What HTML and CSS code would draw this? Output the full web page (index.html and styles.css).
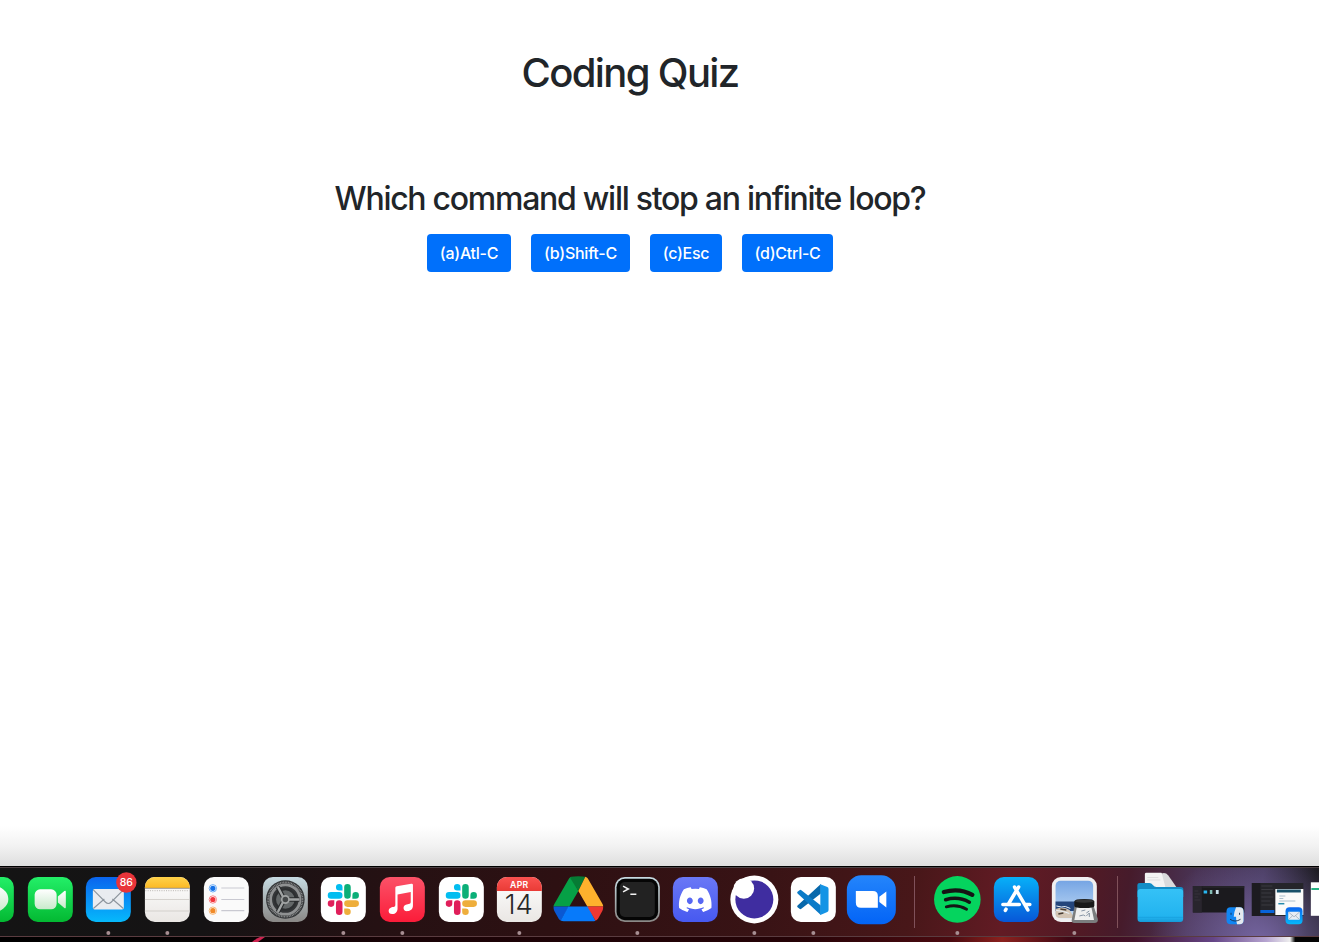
FILE: index.html
```html
<!DOCTYPE html>
<html lang="en">
<head>
<meta charset="utf-8">
<title>Coding Quiz</title>
<link rel="stylesheet" href="styles.css">
</head>
<body>
<svg class="defs" aria-hidden="true">
  <defs>
    <linearGradient id="green" x2="0" y2="1"><stop stop-color="#23ef68"/><stop offset="1" stop-color="#03b932"/></linearGradient>
    <linearGradient id="white" x2="0" y2="1"><stop stop-color="#fff"/><stop offset="1" stop-color="#c8eacb"/></linearGradient>
    <linearGradient id="mail" x2="0" y2="1"><stop stop-color="#0a64ee"/><stop offset="1" stop-color="#06b9fb"/></linearGradient>
    <linearGradient id="paper" x2="0" y2="1"><stop stop-color="#fff"/><stop offset="1" stop-color="#e9e6e3"/></linearGradient>
    <linearGradient id="yellow" x2="0" y2="1"><stop stop-color="#ffd24a"/><stop offset="1" stop-color="#fbb925"/></linearGradient>
    <linearGradient id="steel" x2="0" y2="1"><stop stop-color="#c7dbe2"/><stop offset="1" stop-color="#8a8886"/></linearGradient>
    <linearGradient id="music" x2="0" y2="1"><stop stop-color="#fb5268"/><stop offset="1" stop-color="#fb1c39"/></linearGradient>
    <linearGradient id="cal" x2="0" y2="1"><stop stop-color="#fa5250"/><stop offset="1" stop-color="#e93b36"/></linearGradient>
    <linearGradient id="discord" x2="0" y2="1"><stop stop-color="#6a78f6"/><stop offset="1" stop-color="#4759f0"/></linearGradient>
    <linearGradient id="zoom" x2="0" y2="1"><stop stop-color="#2485fb"/><stop offset="1" stop-color="#0364f6"/></linearGradient>
    <linearGradient id="store" x2="0" y2="1"><stop stop-color="#07b0f8"/><stop offset="1" stop-color="#0757d8"/></linearGradient>
    <linearGradient id="sky" x2="0" y2="1"><stop stop-color="#76a5e4"/><stop offset="1" stop-color="#c3dcf5"/></linearGradient>
    <linearGradient id="folder" x2="0" y2="1"><stop stop-color="#35c1f6"/><stop offset=".85" stop-color="#22b3ef"/><stop offset="1" stop-color="#159bd8"/></linearGradient>
    <g id="slack" transform="translate(-15.6 16.9) scale(1.3)">
      <path fill="#e01e5a" d="M5.042 15.165a2.528 2.528 0 0 1-2.52 2.523A2.528 2.528 0 0 1 0 15.165a2.527 2.527 0 0 1 2.522-2.52h2.52v2.52zM6.313 15.165a2.527 2.527 0 0 1 2.521-2.52 2.527 2.527 0 0 1 2.521 2.52v6.313A2.528 2.528 0 0 1 8.834 24a2.528 2.528 0 0 1-2.521-2.522v-6.313z"/>
      <path fill="#02bdf0" d="M8.834 5.042a2.528 2.528 0 0 1-2.521-2.52A2.528 2.528 0 0 1 8.834 0a2.528 2.528 0 0 1 2.521 2.522v2.52H8.834zM8.834 6.313a2.528 2.528 0 0 1 2.521 2.521 2.528 2.528 0 0 1-2.521 2.521H2.522A2.528 2.528 0 0 1 0 8.834a2.528 2.528 0 0 1 2.522-2.521h6.312z"/>
      <path fill="#0baf78" d="M18.956 8.834a2.528 2.528 0 0 1 2.522-2.521A2.528 2.528 0 0 1 24 8.834a2.528 2.528 0 0 1-2.522 2.521h-2.522V8.834zM17.688 8.834a2.528 2.528 0 0 1-2.523 2.521 2.527 2.527 0 0 1-2.52-2.521V2.522A2.527 2.527 0 0 1 15.165 0a2.528 2.528 0 0 1 2.523 2.522v6.312z"/>
      <path fill="#eeae3c" d="M15.165 18.956a2.528 2.528 0 0 1 2.523 2.522A2.528 2.528 0 0 1 15.165 24a2.527 2.527 0 0 1-2.52-2.522v-2.522h2.52zM15.165 17.688a2.527 2.527 0 0 1-2.52-2.523 2.526 2.526 0 0 1 2.52-2.52h6.313A2.527 2.527 0 0 1 24 15.165a2.528 2.528 0 0 1-2.522 2.523h-6.313z"/>
    </g>
    <clipPath id="tile"><rect x="-22.5" y="10" width="45" height="45" rx="10"/></clipPath>
  </defs>
</svg>

<main class="quiz">
  <h1 class="quiz-title">Coding Quiz</h1>
  <h2 class="quiz-question">Which command will stop an infinite loop?</h2>
  <div class="answers">
    <button class="btn btn-a">(a)Atl-C</button>
    <button class="btn btn-b">(b)Shift-C</button>
    <button class="btn btn-c">(c)Esc</button>
    <button class="btn btn-d">(d)Ctrl-C</button>
  </div>
</main>

<div class="dock-shadow"></div>
<footer class="dock">
  <!-- Messages -->
  <svg class="app" viewBox="-29.35 0 58.7 69"><rect x="-22.5" y="10" width="45" height="45" rx="10" fill="url(#green)"/><ellipse cx="0" cy="32" rx="17" ry="13.5" fill="url(#white)"/></svg>
  <!-- FaceTime -->
  <svg class="app" viewBox="-29.35 0 58.7 69"><rect x="-22.5" y="10" width="45" height="45" rx="10" fill="url(#green)"/><rect x="-15.7" y="22.3" width="22" height="20" rx="5.5" fill="url(#white)"/><path d="M7.5 29.5L14 24q1.5-1 1.5 1v15q0 2-1.5 1L7.5 35.5z" fill="url(#white)"/></svg>
  <!-- Mail -->
  <svg class="app" viewBox="-29.35 0 58.7 69"><rect x="-22.5" y="10" width="45" height="45" rx="10" fill="url(#mail)"/><rect x="-15.5" y="22" width="31" height="20.5" rx="1.8" fill="#e9ecf0"/><path d="M-15 41.5L-4 32M15 41.5L4 32M-15 22.8L-3 35q3 3 6 0L15 22.8" fill="none" stroke="#8d959d" stroke-width="1.1"/><circle cx="18" cy="15.5" r="10.2" fill="#e9343a"/><text class="badge" x="18" y="19.3">86</text><circle class="dot" cy="66" r="2"/></svg>
  <!-- Notes -->
  <svg class="app" viewBox="-29.35 0 58.7 69"><g clip-path="url(#tile)"><rect x="-23" y="10" width="46" height="46" fill="url(#paper)"/><rect x="-23" y="10" width="46" height="11" fill="url(#yellow)"/><path d="M-23 21.3h46" stroke="#8f8a80" stroke-width=".9"/><path d="M-22 23.7h44" stroke="#aaa59f" stroke-width=".8" stroke-dasharray="1 1.3"/><path d="M-23 32.5h46M-23 44h46" stroke="#cdc9c5" stroke-width=".8"/></g><circle class="dot" cy="66" r="2"/></svg>
  <!-- Reminders -->
  <svg class="app" viewBox="-29.35 0 58.7 69"><rect x="-22.5" y="10" width="45" height="45" rx="10" fill="#fafafa"/><path d="M-5 21H18M-5 32.5H18M-5 43.6H18" stroke="#c9c9d1" stroke-width="1.2"/><g fill="#fff"><circle cx="-13.5" cy="21.3" r="3.7" stroke="#4b9af4" stroke-width=".8"/><circle cx="-13.5" cy="32.5" r="3.7" stroke="#f7646a" stroke-width=".8"/><circle cx="-13.5" cy="43.7" r="3.7" stroke="#f5a758" stroke-width=".8"/></g><circle cx="-13.5" cy="21.3" r="2.6" fill="#1672e8"/><circle cx="-13.5" cy="32.5" r="2.6" fill="#f2343b"/><circle cx="-13.5" cy="43.7" r="2.6" fill="#f18a27"/></svg>
  <!-- System Preferences -->
  <svg class="app" viewBox="-29.35 0 58.7 69"><rect x="-22.5" y="10" width="45" height="45" rx="10" fill="url(#steel)"/><g fill="none" transform="translate(0 32.5)"><circle r="19.3" fill="#343638"/><circle r="17.2" stroke="#8d8f90" stroke-width="1.7" stroke-dasharray=".9 .7"/><circle r="14.7" stroke="#8f9192" stroke-width="2.8"/><circle r="10.3" fill="#646869" stroke="#2d2f31" stroke-width="2"/><path d="M2 0H14M-2-2L-7.5-12.5M-2 2L-7.5 12.5" stroke="#292b2d" stroke-width="4.6"/><path d="M2 0H14M-2-2L-7.5-12.5M-2 2L-7.5 12.5" stroke="#a1a4a4" stroke-width="2.4"/><circle r="3.6" fill="#454849" stroke="#a1a4a4" stroke-width="1.7"/></g></svg>
  <!-- Slack -->
  <svg class="app" viewBox="-29.35 0 58.7 69"><rect x="-22.5" y="10" width="45" height="45" rx="10" fill="#fff"/><use href="#slack"/><circle class="dot" cy="66" r="2"/></svg>
  <!-- Music -->
  <svg class="app" viewBox="-29.35 0 58.7 69"><rect x="-22.5" y="10" width="45" height="45" rx="10" fill="url(#music)"/><path d="M-7 20.7Q-7 19.5-5.7 19.2L9 16.8Q10.6 16.5 10.6 18V38.5C10.6 42 8.5 43.8 5.5 44.1C2.5 44.4 1 42.8 1.2 40.7C1.5 37.5 5 37.2 7.2 36.7Q8.4 36.4 8.4 35V25L-4.8 27.6V41.4C-4.8 45-7 46.8-10 47.1C-12.5 47.2-13.8 45.8-13.7 43.8C-13.5 40.5-10 40.2-8.2 39.8Q-7 39.4-7 38z" fill="#fff"/><circle class="dot" cy="66" r="2"/></svg>
  <!-- Slack -->
  <svg class="app" viewBox="-29.35 0 58.7 69"><rect x="-22.5" y="10" width="45" height="45" rx="10" fill="#fff"/><use href="#slack"/></svg>
  <!-- Calendar -->
  <svg class="app" viewBox="-29.35 0 58.7 69"><g clip-path="url(#tile)"><rect x="-23" y="10" width="46" height="46" fill="url(#paper)"/><rect x="-23" y="10" width="46" height="14" fill="url(#cal)"/></g><text class="month" x="0" y="20.9">APR</text><text class="day" x="-.5" y="47">14</text><circle class="dot" cy="66" r="2"/></svg>
  <!-- Google Drive -->
  <svg class="app" viewBox="-29.35 0 58.7 69"><g transform="translate(0 32)"><path d="M-7-22.2Q-8.5-21.8-9.3-20.4L-24 5Q-25 6.5-24.8 7.5H-9L0-8z" fill="#06a046"/><path d="M-7-22.2Q-5-22.8 0-22.8T7-22.2L0-8-8-20.8z" fill="#067b34"/><path d="M7-22.2Q8.8-21.8 9.5-20.4L24.2 5Q25 6.5 24.8 7.5H9L0-8z" fill="#feb12d"/><path d="M-24.8 7.5H-9.5L-17.5 21.6Q-19 21-19.8 19.6L-24 12Q-25 10-24.8 7.5z" fill="#0a58d2"/><path d="M-10 7.5H10L17 21.7Q16 22.2 14 22.2H-14.5Q-16.5 22.2-17.7 21.5z" fill="#077afa"/><path d="M9 7.5H24.8Q25 10 24 12L19.8 19.6Q19 21 17.2 21.7z" fill="#ef3832"/></g></svg>
  <!-- Terminal -->
  <svg class="app" viewBox="-29.35 0 58.7 69"><rect x="-22.5" y="10" width="45" height="45" rx="10" fill="url(#steel)"/><rect x="-20.8" y="11.7" width="41.6" height="41.6" rx="8.5" fill="#050505"/><rect x="-17.5" y="15" width="35" height="35" rx="5" fill="#222"/><path d="M-14.3 19.2L-9 22L-14.3 24.9M-7 27.2H-1" fill="none" stroke="#f2f2f2" stroke-width="1.5"/><circle class="dot" cy="66" r="2"/></svg>
  <!-- Discord -->
  <svg class="app" viewBox="-29.35 0 58.7 69"><rect x="-22.5" y="10" width="45" height="45" rx="10" fill="url(#discord)"/><path transform="translate(-16.4 16.3) scale(1.36)" fill="#fff" d="M20.317 4.37a19.791 19.791 0 0 0-4.885-1.515.074.074 0 0 0-.079.037c-.21.375-.444.864-.608 1.25a18.27 18.27 0 0 0-5.487 0 12.64 12.64 0 0 0-.617-1.25.077.077 0 0 0-.079-.037A19.736 19.736 0 0 0 3.677 4.37a.07.07 0 0 0-.032.027C.533 9.046-.32 13.58.099 18.057a.082.082 0 0 0 .031.057 19.9 19.9 0 0 0 5.993 3.03.078.078 0 0 0 .084-.028c.462-.63.874-1.295 1.226-1.994a.076.076 0 0 0-.041-.106 13.107 13.107 0 0 1-1.872-.892.077.077 0 0 1-.008-.128c.126-.094.252-.192.372-.292a.074.074 0 0 1 .077-.01c3.928 1.793 8.18 1.793 12.062 0a.074.074 0 0 1 .078.01c.12.098.246.198.373.292a.077.077 0 0 1-.006.127 12.299 12.299 0 0 1-1.873.892.077.077 0 0 0-.041.107c.36.698.772 1.362 1.225 1.993a.076.076 0 0 0 .084.028 19.839 19.839 0 0 0 6.002-3.03.077.077 0 0 0 .032-.054c.5-5.177-.838-9.674-3.549-13.66a.061.061 0 0 0-.031-.03zM8.02 15.33c-1.183 0-2.157-1.085-2.157-2.419 0-1.333.956-2.419 2.157-2.419 1.21 0 2.176 1.096 2.157 2.42 0 1.333-.956 2.418-2.157 2.418zm7.975 0c-1.183 0-2.157-1.085-2.157-2.419 0-1.333.955-2.419 2.157-2.419 1.21 0 2.176 1.096 2.157 2.42 0 1.333-.946 2.418-2.157 2.418z"/></svg>
  <!-- Insomnia -->
  <svg class="app" viewBox="-29.35 0 58.7 69"><circle cy="32.4" r="24" fill="#fff"/><circle cy="32.4" r="19" fill="#3f2da0"/><circle cx="-10.5" cy="21.5" r="10.3" fill="#fff"/><circle class="dot" cy="66" r="2"/></svg>
  <!-- VS Code -->
  <svg class="app" viewBox="-29.35 0 58.7 69"><rect x="-22.5" y="10" width="45" height="45" rx="10" fill="#fff"/><path d="M-15.8 38.5L7.5 17v9.5L-12 41.8q-1 .7-1.8 0l-2-1.6q-.8-.8 0-1.7z" fill="#0868ab"/><path d="M-15.8 26.5L7.5 48v-9.5L-12 23.2q-1-.7-1.8 0l-2 1.6q-.8.8 0 1.7z" fill="#0b7bc8"/><path d="M7 17.2L14 20q1.2.5 1.2 2v21q0 1.5-1.2 2L7 48z" fill="#1494e5"/><circle class="dot" cy="66" r="2"/></svg>
  <!-- Zoom -->
  <svg class="app" viewBox="-29.35 0 58.7 69"><rect x="-24.5" y="8.2" width="49" height="49" rx="14.5" fill="url(#zoom)"/><path d="M-15.5 24H1.5Q6.5 24 6.5 29V40.7H-10.5Q-15.5 40.7-15.5 35.7zM8 29.8L15 24.4V40.5L8 35z" fill="#fff"/></svg>
  <div class="divider"></div>
  <!-- Spotify -->
  <svg class="app" viewBox="-29.35 0 58.7 69"><circle cy="32.4" r="23.3" fill="#05d45e"/><g fill="none" stroke="#151515" stroke-linecap="round"><path d="M-13.5 25Q2 20.5 15 27.8" stroke-width="4.3"/><path d="M-11.7 32.7Q1 29 12 35.2" stroke-width="3.6"/><path d="M-11 39.8Q0 37 9.2 42.2" stroke-width="2.9"/></g><circle class="dot" cy="66" r="2"/></svg>
  <!-- App Store -->
  <svg class="app" viewBox="-29.35 0 58.7 69"><rect x="-22.5" y="10" width="45" height="45" rx="10" fill="url(#store)"/><g fill="none" stroke="#fff" stroke-width="3.5" stroke-linecap="round"><path d="M2.3 20L-8.2 37.5M-1.8 20L11.5 43M-13.5 37.5H3M9.5 37.5H13.5M-10.3 42.2L-11 43.4"/></g></svg>
  <!-- Preview -->
  <svg class="app" viewBox="-29.35 0 58.7 69"><rect x="-22.5" y="10" width="45" height="45" rx="9" fill="#f0eff0"/><rect x="-18.8" y="13.7" width="37.6" height="37.6" rx="5" fill="url(#sky)"/><path d="M-18.8 34.5H18.8V44H-18.8z" fill="#24457b"/><path d="M-18.8 42q8-3 14 1l5 8H-14q-4.8 0-4.8-4z" fill="#d3c5b5"/><path d="M-18 39l5 1 4-.5 5 2M-18 43.5l7 1 6 2" stroke="#e9f2fa" fill="none"/><path d="M-14 42l6 1M-16 47l5-1" stroke="#493e35" stroke-width="1.5"/><path d="M.5 38H19L23.5 52Q24 56 20 56H0Q-3.5 56-2.5 52z" fill="#7b7d7e"/><path d="M2.5 40H17L19.7 53H0z" fill="#efefef"/><path d="M7 44l4-1M12 46l3-2M5 49l4-1 2 1M12 49l3-3v4" stroke="#8694a4" fill="none"/><path d="M0 34.5Q0 32 10 32T20 34.5V39Q20 41 10 41T0 39z" fill="#191919"/><ellipse cx="10" cy="34.2" rx="9.2" ry="1.6" fill="#353535"/><circle class="dot" cy="66" r="2"/></svg>
  <div class="divider"></div>
  <!-- Folder -->
  <svg class="app" viewBox="-29.35 0 58.7 69"><path d="M-15.5 7Q-15.5 5.7-14 5.7H1L15.5 22H-15.5z" fill="#f3f3f3"/><path d="M1.5 6.5Q5 5 8 8.5L16 20V24H6z" fill="#d9dadc"/><path d="M-13 10.5H-2M-13 13H0" stroke="#d5d5d7" stroke-width=".7"/><path d="M-23 18.5Q-23 16-20.5 16H-11Q-9 16-7.5 18T-4 20H20.5Q23 20 23 22.5V30H-23z" fill="#128dc6"/><rect x="-22.8" y="22" width="45.6" height="33" rx="3" fill="url(#folder)"/><path d="M-22.5 50.3H22.5" stroke="#159cd8" stroke-width=".7"/></svg>
  <!-- Minimized Finder window -->
  <svg class="app" viewBox="-29.35 0 58.7 69"><rect x="-25.5" y="19" width="51.5" height="26.5" fill="#1b1a1e"/><rect x="-25.5" y="19" width="9" height="26.5" fill="#28252d"/><path d="M-16 20H26" stroke="#2d2a31"/><path d="M-24 24h4M-24 27h6M-24 30h4M-24 33h6" stroke="#3c3742" stroke-width=".7"/><path d="M-14.7 23.5h3.5v3h-3.5z" fill="#28b5ef"/><path d="M-8.5 23h2.5v4h-2.5z" fill="#83bdb6"/><path d="M-2.5 23h2.8v4h-2.8z" fill="#c7dfeb"/><g transform="translate(16.7 48.8)"><rect x="-8.5" y="-8.5" width="17" height="17" rx="4" fill="#1186f3"/><path d="M1-8.5H4.5Q8.5-8.5 8.5-4.5V4.5Q8.5 8.5 4.5 8.5H2Q1 5 1 1H-1.3Q-1-4 1-8.5z" fill="#e4e9ef"/><path d="M-4-3v2M4.5-3v2M-5 3.5Q0 7 5.5 3.5" fill="none" stroke="#18304e" stroke-width=".9"/></g></svg>
  <!-- Minimized Mail window -->
  <svg class="app" viewBox="-29.35 0 58.7 69"><rect x="-25.5" y="16" width="51.5" height="33" fill="#25252a"/><rect x="-25.5" y="16" width="8.5" height="33" fill="#1c1b20"/><path d="M-16 19h11M-16 22.5h12M-16 26h10M-16 30h12M-16 34h9M-16 38h12" stroke="#3b3b41"/><rect x="-17" y="43" width="14" height="3" fill="#0864d9"/><rect x="-2" y="22" width="28" height="26" fill="#fafafa"/><path d="M-.5 24h24" stroke="#185069" stroke-width="3"/><path d="M2 29h6M2 31.5h4M2 34h16" stroke="#9ab1c2" stroke-width=".8"/><path d="M1 36.7h6" stroke="#258aac" stroke-width="1.5"/><g transform="translate(16.7 48.8)"><rect x="-8.5" y="-8.5" width="17" height="17" rx="4" fill="url(#mail)"/><rect x="-5.8" y="-4" width="11.6" height="8" rx=".7" fill="#e7edf4"/><path d="M-5.500-3.700L0 1L5.500-3.700M-5.500 3.700L-1.500 0M5.500 3.700L1.500 0" fill="none" stroke="#8795a4" stroke-width=".6"/></g></svg>
  <!-- Minimized browser window -->
  <svg class="app" viewBox="-29.35 0 58.7 69"><rect x="-25.5" y="15.3" width="51" height="33.5" fill="#fff"/><path d="M-25 22h50" stroke="#27b384" stroke-width="2"/></svg>
</footer>
<div class="wallpaper"><svg class="streak" viewBox="0 0 20 5"><path d="M2 5Q7 1 10 0h5L8 5z" fill="#cd2350"/></svg></div>
</body>
</html>
```
FILE: styles.css
```css
* { box-sizing: border-box; }

body {
  margin: 0;
  height: 942px;
  display: flex;
  flex-direction: column;
  overflow: hidden;
  background: #fff;
  color: #212529;
  font-family: Inter, "Liberation Sans", sans-serif;
}

.defs { position: absolute; width: 0; height: 0; }

.quiz {
  flex: 1;
  width: 1260px;
  padding-top: 49px;
  text-align: center;
}

.quiz-title {
  margin: 0;
  font-size: 40px;
  font-weight: 550;
  line-height: 48px;
  letter-spacing: -1.65px;
}

.quiz-question {
  margin: 83px 0 0;
  font-size: 32px;
  font-weight: 550;
  line-height: 38px;
  letter-spacing: -1.27px;
}

.answers {
  display: flex;
  justify-content: center;
  gap: 20px;
  margin-top: 16px;
}

.btn {
  height: 38px;
  padding: 0;
  border: 0;
  border-radius: 4px;
  background: #0070fb;
  color: #fff;
  font: 450 16px/38px Inter, "Liberation Sans", sans-serif;
  letter-spacing: -0.26px;
  white-space: nowrap;
}
.btn-a { width: 84px; }
.btn-b { width: 99px; }
.btn-c { width: 72px; }
.btn-d { width: 91px; }

.dock-shadow {
  height: 40px;
  background: linear-gradient(#fff, #f2f2f2 50%, #dedede);
}

.dock {
  display: flex;
  flex: none;
  height: 71px;
  padding-top: 1px;
  border-top: 1px solid #000;
  border-bottom: 1px solid #5a3c40;
  box-shadow: inset 0 1px #4b4043;
  background:
    radial-gradient(ellipse 110px 90px at 1260px 75px, #7565a0, transparent),
    linear-gradient(100deg, #141414 0, #151314 16%, #251113 29%, #2d1012 42%, #391315 58%, #481719 69%, #621b24 76%, #511a25 82%, #461b2b 85%, #493354 90%, #46395c 95%, #19181c 99%);
}

.app {
  flex: none;
  width: 58.7px;
  height: 69px;
  margin-top: -1px;
  overflow: visible;
}
.app:first-child { margin-left: -37.9px; }

.dot { fill: #a78f93; }
.badge { fill: #fff; font: 500 10.5px Inter, sans-serif; text-anchor: middle; }
.month { fill: #fff; font: 600 8.7px Inter, sans-serif; text-anchor: middle; letter-spacing: .3px; }
.day { fill: #282828; font: 300 27.5px Inter, sans-serif; text-anchor: middle; letter-spacing: 0; }

.divider {
  flex: none;
  width: 1px;
  height: 52px;
  margin: 8px 12.9px 0;
  background: #80515a;
}

.wallpaper {
  flex: none;
  height: 5px;
  padding-left: 250px;
  background: linear-gradient(90deg, #000 0, #050102 18%, #190306 30%, #250307 60%, #4a0a10 72%, #8b211e 76%, #3f0815 81%, #421128 86%, #654687 92%, #b6a4d0 96%, #eee 97.8%, #050505 98.2%);
}

.streak { display: block; width: 20px; height: 5px; }
```
